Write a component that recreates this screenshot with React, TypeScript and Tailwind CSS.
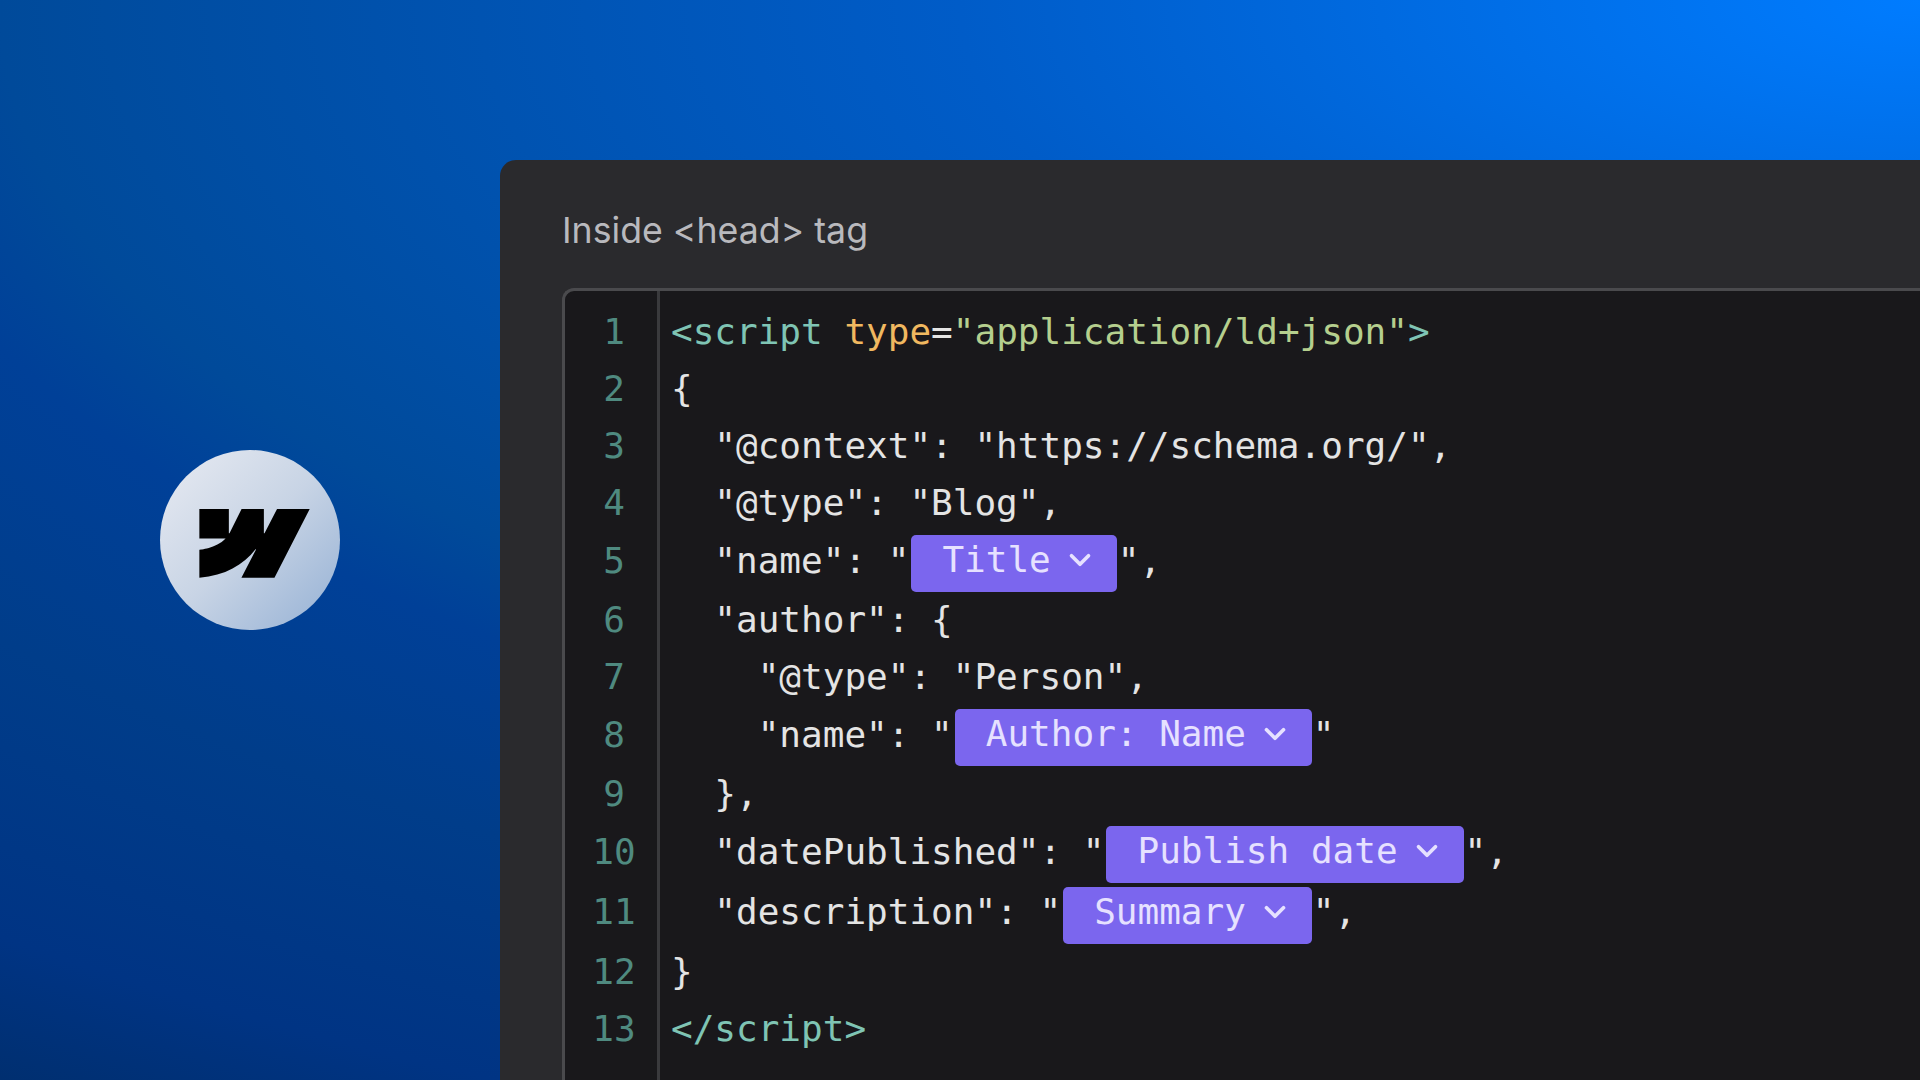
import { ChevronDown } from "lucide-react";
import type { ReactNode } from "react";

function Pill({ label }: { label: string }) {
  return (
    <span className="ml-[2px] mr-[1px] mt-[6px] inline-flex h-[57px] items-center gap-[12px] rounded-[5px] bg-[#7b66ee] pb-[7px] pl-[31px] pr-[20px] text-[#e6e1ff]">
      {label}
      <ChevronDown className="h-[34px] w-[34px]" strokeWidth={2.6} />
    </span>
  );
}

const teal = "text-[#7fc4b4]";

const lines: { height: string; pad: string; body: ReactNode }[] = [
  {
    height: "h-[57px]",
    pad: "pb-[3px]",
    body: (
      <>
        <span className={teal}>{"<script "}</span>
        <span className="text-[#f0b860]">type</span>
        <span>=</span>
        <span className="text-[#b5cf8e]">"application/ld+json"</span>
        <span className={teal}>{">"}</span>
      </>
    ),
  },
  { height: "h-[57px]", pad: "pb-[3px]", body: "{" },
  { height: "h-[57px]", pad: "pb-[3px]", body: '  "@context": "https://schema.org/",' },
  { height: "h-[57px]", pad: "pb-[3px]", body: '  "@type": "Blog",' },
  {
    height: "h-[60px]",
    pad: "pb-[5px]",
    body: (
      <>
        {'  "name": "'}
        <Pill label="Title" />
        {'",'}
      </>
    ),
  },
  { height: "h-[57px]", pad: "pb-[3px]", body: '  "author": {' },
  { height: "h-[57px]", pad: "pb-[3px]", body: '    "@type": "Person",' },
  {
    height: "h-[60px]",
    pad: "pb-[5px]",
    body: (
      <>
        {'    "name": "'}
        <Pill label="Author: Name" />
        {'"'}
      </>
    ),
  },
  { height: "h-[57px]", pad: "pb-[3px]", body: "  }," },
  {
    height: "h-[60px]",
    pad: "pb-[5px]",
    body: (
      <>
        {'  "datePublished": "'}
        <Pill label="Publish date" />
        {'",'}
      </>
    ),
  },
  {
    height: "h-[61px]",
    pad: "pb-[5px]",
    body: (
      <>
        {'  "description": "'}
        <Pill label="Summary" />
        {'",'}
      </>
    ),
  },
  { height: "h-[57px]", pad: "pb-[3px]", body: "}" },
  { height: "h-[57px]", pad: "pb-[3px]", body: <span className={teal}>{"</script>"}</span> },
];

export default function App() {
  return (
    <div className="flex h-screen w-screen overflow-hidden bg-[radial-gradient(1920px_800px_at_100%_0%,#007cff_0%,#005cc8_50%,#004a9a_100%,#004098_109%,#003d8a_128%,#003484_154%,#002f70_168%)]">
      <div className="flex w-[500px] shrink-0 items-center justify-center">
        <div className="flex h-[180px] w-[180px] items-center justify-center rounded-full bg-[linear-gradient(135deg,#e8ebf2_0%,#c8d4e5_50%,#94b0d4_100%)] pl-[8px] pt-[6px]">
          <svg viewBox="0 0 1080 675" className="h-[69px] w-[111px]" fill="#000">
            <path d="M1080 0L735.386 673.684H411.95L556.057 394.481H549.591C430.703 548.934 253.325 650.61 0.588 673.684V398.344C0.588 398.344 162.266 388.794 257.307 288.871H0.588V0.006H289.118V237.61L295.593 237.584L413.495 0.006H631.705V236.106L638.18 236.096L760.512 0H1080Z" />
          </svg>
        </div>
      </div>

      <div className="mt-[160px] flex min-w-0 flex-1 flex-col rounded-tl-[16px] bg-[#2a2a2d] pl-[62px] pt-[48px]">
        <div className="font-['Inter',sans-serif] text-[35.7px] leading-[44px] text-[#b9b9bd]">
          {"Inside <head> tag"}
        </div>
        <div className="mt-[36px] flex flex-1 rounded-tl-[12px] border-l-[3px] border-t-[3px] border-[#4a4a4d] bg-[#19181b] font-['DejaVu_Sans_Mono',monospace] text-[36px] text-[#e4e4e4]">
          <div className="flex w-[95px] shrink-0 flex-col border-r-[3px] border-[#3a3a3d] pt-[14px] text-[#4f8a80]">
            {lines.map((line, i) => (
              <div key={i} className={`${line.height} ${line.pad} flex items-center justify-center pl-[6px]`}>
                {i + 1}
              </div>
            ))}
          </div>
          <div className="flex flex-1 flex-col whitespace-pre pl-[11px] pt-[14px]">
            {lines.map((line, i) => (
              <div key={i} className={`${line.height} ${line.pad} flex items-center`}>
                <span className="inline-flex items-center whitespace-pre">{line.body}</span>
              </div>
            ))}
          </div>
        </div>
      </div>
    </div>
  );
}
